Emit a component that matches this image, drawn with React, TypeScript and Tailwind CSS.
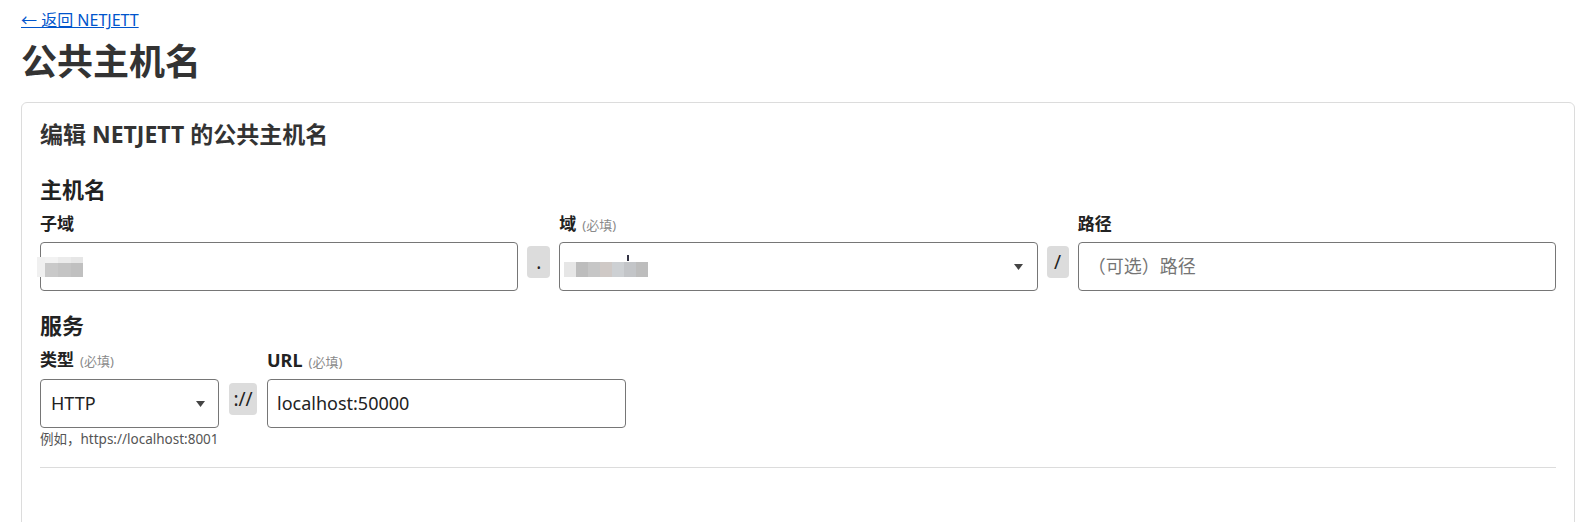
import React from "react";

const font = { fontFamily: '"Noto Sans", "Noto Sans CJK SC", sans-serif' };

function Arrow() {
  return (
    <svg width="9" height="6" viewBox="0 0 9 6" className="block">
      <path d="M0 0 L9 0 L4.5 6 Z" fill="#444" />
    </svg>
  );
}

function Sep({ children }: { children: React.ReactNode }) {
  return (
    <div className="mt-[4px] h-[32px] rounded-[4px] bg-[#dcdcdc] flex items-center justify-center text-[19px] text-[#222] leading-none">
      {children}
    </div>
  );
}

function Label({ text, req }: { text: string; req?: boolean }) {
  return (
    <div className="flex items-baseline mb-[5px] leading-[24px]">
      <span className="text-[17px] font-bold text-[#222]">{text}</span>
      {req && <span className="ml-[6px] text-[13px] text-[#8a8a8a]">(必填)</span>}
    </div>
  );
}

export default function App() {
  return (
    <div className="bg-white min-h-[540px] pl-[21px] pr-[5px] pt-[10px] text-[#333]" style={font}>
      <a href="#" className="block w-fit text-[16px] leading-[21px] text-[#0055cc] underline">
        ← 返回 NETJETT
      </a>
      <h1 className="mt-[9px] text-[36px] font-bold leading-[44px] text-[#333]">公共主机名</h1>
      <div className="mt-[18px] border border-[#dcdcdc] rounded-[6px] px-[18px] pt-[16px] min-h-[440px]">
        <h2 className="text-[23px] font-bold leading-[30px] text-[#333]">编辑 NETJETT 的公共主机名</h2>
        <h3 className="mt-[25px] text-[22px] font-bold leading-[30px] text-[#222]">主机名</h3>
        <div className="mt-[8px] grid grid-cols-[1fr_23px_1fr_22px_1fr] gap-x-[9px]">
          <Label text="子域" />
          <div />
          <Label text="域" req />
          <div />
          <Label text="路径" />

          <div className="relative h-[49px] border border-[#767676] rounded-[4px]">
            <div className="absolute left-[-4px] top-[14px] flex blur-[0.6px]">
              <div className="w-[8px] h-[20px] bg-[#f0f0f0]" />
              <div className="w-[13px] h-[20px] flex flex-col">
                <div className="h-[6px] bg-[#f2f2f2]" />
                <div className="h-[14px] bg-[#c9c9c9]" />
              </div>
              <div className="w-[13px] h-[20px] flex flex-col">
                <div className="h-[6px] bg-[#ebebeb]" />
                <div className="h-[14px] bg-[#c4c4c4]" />
              </div>
              <div className="w-[12px] h-[20px] flex flex-col">
                <div className="h-[6px] bg-[#e6e6e6]" />
                <div className="h-[14px] bg-[#c0c0c0]" />
              </div>
            </div>
          </div>
          <Sep>.</Sep>
          <div className="relative h-[49px] border border-[#767676] rounded-[4px] flex items-center justify-end pr-[14px]">
            <div className="absolute left-[4px] top-[19px] flex blur-[0.5px]">
              <div className="w-[12px] h-[15px] bg-[#e6e6e6]" />
              <div className="w-[12px] h-[15px] bg-[#bdbdbd]" />
              <div className="w-[12px] h-[15px] bg-[#c6c6c6]" />
              <div className="w-[12px] h-[15px] bg-[#cfc9c6]" />
              <div className="w-[12px] h-[15px] bg-[#cdd0d3]" />
              <div className="w-[12px] h-[15px] bg-[#c3c5c8]" />
              <div className="w-[12px] h-[15px] bg-[#bdbdbd]" />
            </div>
            <div className="absolute left-[67px] top-[12px] w-[2px] h-[6px] bg-[#334]" />
            <Arrow />
          </div>
          <Sep>/</Sep>
          <div className="h-[49px] border border-[#767676] rounded-[4px] flex items-center px-[9px] text-[18px] text-[#757575]">
            （可选）路径
          </div>
        </div>

        <h3 className="mt-[19px] text-[22px] font-bold leading-[30px] text-[#222]">服务</h3>
        <div className="mt-[8px] grid grid-cols-[179px_28px_359px] gap-x-[10px]">
          <Label text="类型" req />
          <div />
          <div className="flex items-baseline mb-[5px] leading-[24px]">
            <span className="text-[18px] font-bold text-[#222]">URL</span>
            <span className="ml-[6px] text-[13px] text-[#8a8a8a]">(必填)</span>
          </div>

          <div className="h-[49px] border border-[#767676] rounded-[4px] flex items-center justify-between pl-[10px] pr-[13px] text-[18px] text-[#222]">
            <span>HTTP</span>
            <Arrow />
          </div>
          <Sep>://</Sep>
          <div className="h-[49px] border border-[#767676] rounded-[4px] flex items-center px-[9px] text-[18px] text-[#222]">
            localhost:50000
          </div>

          <div className="mt-[2px] text-[13.5px] leading-[18px] text-[#555] whitespace-nowrap">例如，https://localhost:8001</div>
        </div>
        <div className="mt-[19px] h-px bg-[#dcdcdc]" />
      </div>
    </div>
  );
}
